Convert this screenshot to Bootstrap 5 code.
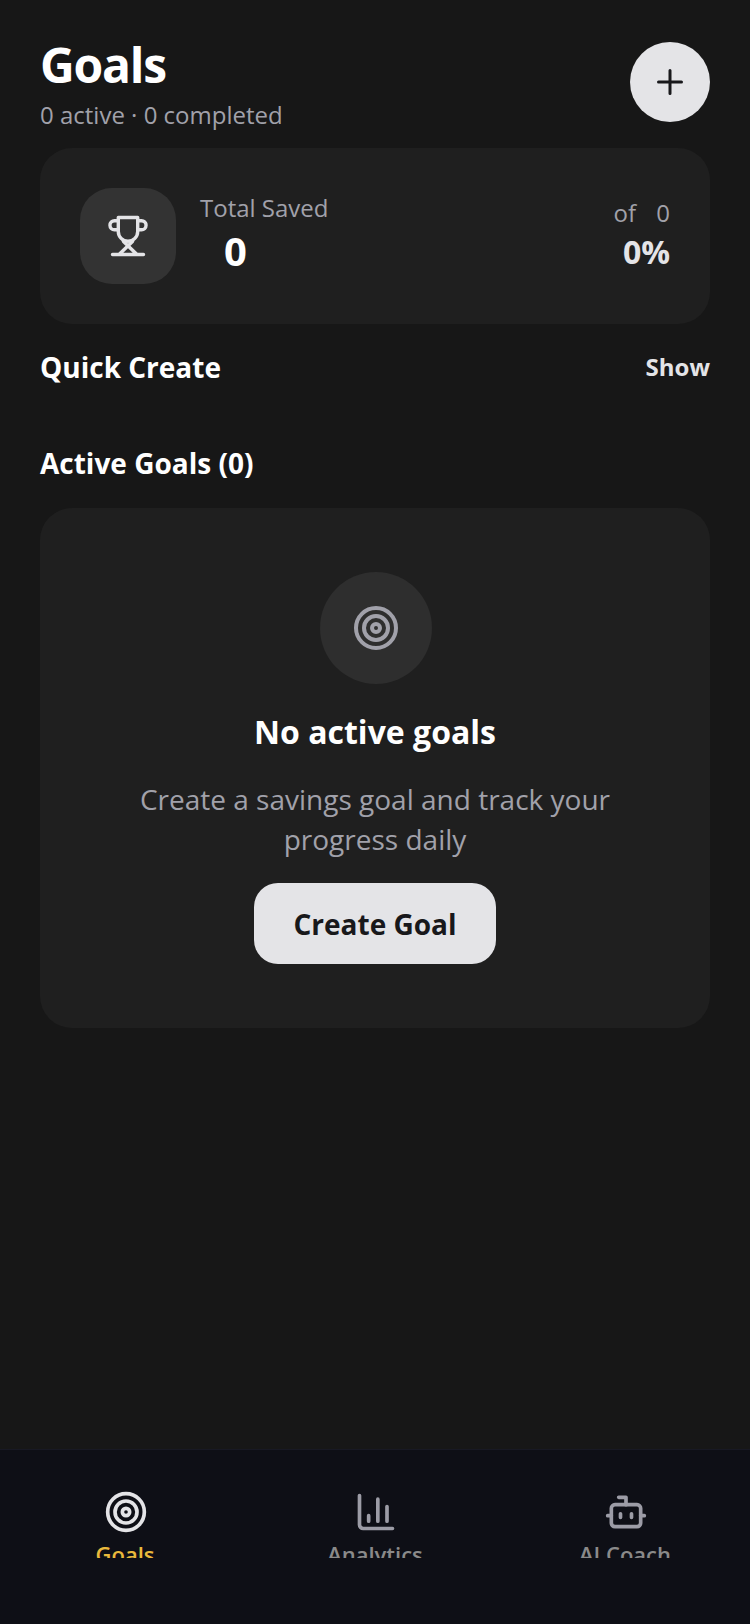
<!doctype html>
<html lang="en">
<head>
<meta charset="utf-8">
<title>Goals</title>
<link href="https://cdn.jsdelivr.net/npm/bootstrap@5.3.0/dist/css/bootstrap.min.css" rel="stylesheet">
<style>
html,body{height:100%}
body{background:#171717;color:#fff;font-family:"Open Sans","Noto Sans",sans-serif}
.app-shell{height:1624px;overflow:hidden}
.page-main{padding:32px 40px 0}
.page-head{height:116px}
.page-title{font-size:48px;line-height:60px;font-weight:700;margin:3px 0 4px;letter-spacing:-1.2px}
.page-sub{font-size:24px;line-height:32px;color:#a1a1aa;margin:0}
.add-btn{width:80px;height:80px;padding:0;background:#e4e4e7;border:0;color:#18181b;margin-top:10px}
.add-btn:hover{background:#e4e4e7}
.panel-box{background:#1f1f1f;border:0;border-radius:32px}
.summary{height:176px;padding:40px;gap:24px}
.trophy-box{width:96px;height:96px;background:#333;border-radius:32px;color:#e4e4e7}
.sum-copy{margin-top:-3px}
.sum-label{font-size:24px;line-height:32px;color:#a1a1aa}
.sum-value{font-size:40px;line-height:53px;font-weight:700;padding-left:24px}
.sum-right{margin-top:1px}
.sum-of{font-size:24px;line-height:30px;color:#a1a1aa;word-spacing:14px;margin-bottom:1px}
.sum-pct{font-size:32px;line-height:46px;font-weight:700;color:#e4e4e7}
.sect-title{font-size:28px;line-height:40px;font-weight:700;margin:0}
.quick-row{margin-top:23px}
.show-link{font-size:24px;font-weight:700;color:#e4e4e7}
.active-row{margin-top:56px;margin-bottom:25px}
.empty-box{height:520px;padding:64px 40px}
.empty-circle{width:112px;height:112px;background:#2e2e2e;color:#a1a1aa;margin-left:2px}
.empty-title{font-size:32px;line-height:44px;font-weight:700;margin:26px 0 0}
.empty-text{font-size:28px;line-height:40px;color:#a1a1aa;margin:25px 0 0;max-width:500px}
.create-btn{width:242px;height:81px;background:#e4e4e7;color:#18181b;border:0;border-radius:24px;font-size:28px;font-weight:700;margin-top:24px;padding:0}
.create-btn:hover{background:#e4e4e7;color:#18181b}
.tab-bar{height:175px;background:#0e0f16;border-top:1px solid #181924;padding-top:40px}
.tab-item{flex:1 1 0;height:68px;overflow:hidden;color:#9c9ca6}
.tab-item.on{color:#e4e4e7}
.tab-glyph{margin-left:2px}
.tab-label{font-size:22px;line-height:28px;font-weight:600;color:#8a8a8a;margin-top:6px;white-space:nowrap}
.tab-item.on .tab-label{color:#eab93c}
</style>
</head>
<body>
<div class="app-shell d-flex flex-column">
  <main class="page-main flex-grow-1">
    <div class="page-head d-flex justify-content-between align-items-start">
      <div>
      <h1 class="page-title">Goals</h1>
      <p class="page-sub">0 active · 0 completed</p>
      </div>
      <button class="btn add-btn rounded-circle d-flex align-items-center justify-content-center" aria-label="Add">
        <svg width="32" height="32" viewBox="0 0 32 32" fill="none" stroke="currentColor" stroke-width="3" stroke-linecap="round"><path d="M4.500 16h23M16 4.500v23"/></svg>
      </button>
    </div>
    <section class="panel-box summary d-flex align-items-center">
      <div class="trophy-box d-flex align-items-center justify-content-center flex-shrink-0">
        <svg width="48" height="48" viewBox="0 0 48 48" fill="none" stroke="currentColor" stroke-width="3.400" stroke-linecap="round" stroke-linejoin="round"><path d="M14.300 8.700H10.500a4.550 4.550 0 0 0 0 9.100H14M33.700 8.700h3.800a4.550 4.550 0 0 1 0 9.100H34"/><path d="M14.300 5.500H33.700V19.500a9.700 9.700 0 0 1-19.400 0z"/><path d="M19.500 29.500L33 42.500M28.500 29.500L15 42.500M8.500 42.500H39.500"/></svg>
      </div>
      <div class="sum-copy flex-grow-1">
        <div class="sum-label">Total Saved</div>
        <div class="sum-value">0</div>
      </div>
      <div class="sum-right text-end">
        <div class="sum-of">of 0</div>
        <div class="sum-pct">0%</div>
      </div>
    </section>
    <div class="quick-row d-flex justify-content-between align-items-center">
      <h2 class="sect-title">Quick Create</h2>
      <span class="show-link">Show</span>
    </div>
    <h2 class="sect-title active-row">Active Goals (0)</h2>
    <section class="panel-box empty-box d-flex flex-column align-items-center text-center">
      <div class="empty-circle rounded-circle d-flex align-items-center justify-content-center flex-shrink-0">
        <svg width="48" height="48" viewBox="0 0 24 24" fill="none" stroke="currentColor" stroke-width="2"><circle cx="12" cy="12" r="10"/><circle cx="12" cy="12" r="6"/><circle cx="12" cy="12" r="2"/></svg>
      </div>
      <h3 class="empty-title">No active goals</h3>
      <p class="empty-text">Create a savings goal and track your progress daily</p>
      <button class="btn create-btn">Create Goal</button>
    </section>
  </main>
  <nav class="tab-bar flex-shrink-0">
    <div class="d-flex">
      <div class="tab-item on d-flex flex-column align-items-center">
        <svg width="44" height="44" viewBox="0 0 24 24" fill="none" stroke="currentColor" stroke-width="2" class="tab-glyph flex-shrink-0"><circle cx="12" cy="12" r="10"/><circle cx="12" cy="12" r="6"/><circle cx="12" cy="12" r="2"/></svg>
        <div class="tab-label">Goals</div>
      </div>
      <div class="tab-item d-flex flex-column align-items-center">
        <svg width="44" height="44" viewBox="0 0 24 24" fill="none" stroke="currentColor" stroke-width="2" stroke-linecap="round" stroke-linejoin="round" class="tab-glyph flex-shrink-0"><path d="M3 3v16a2 2 0 0 0 2 2h16"/><path d="M8 17v-3M13 17V5M18 17V9"/></svg>
        <div class="tab-label">Analytics</div>
      </div>
      <div class="tab-item d-flex flex-column align-items-center">
        <svg width="44" height="44" viewBox="0 0 24 24" fill="none" stroke="currentColor" stroke-width="2" stroke-linecap="round" stroke-linejoin="round" class="tab-glyph flex-shrink-0"><path d="M12 8V4H8"/><rect x="4" y="8" width="16" height="12" rx="2"/><path d="M2 14h2M20 14h2M15 13v2M9 13v2"/></svg>
        <div class="tab-label">AI Coach</div>
      </div>
    </div>
  </nav>
</div>
<script src="https://cdn.jsdelivr.net/npm/bootstrap@5.3.0/dist/js/bootstrap.bundle.min.js"></script>
</body>
</html>
